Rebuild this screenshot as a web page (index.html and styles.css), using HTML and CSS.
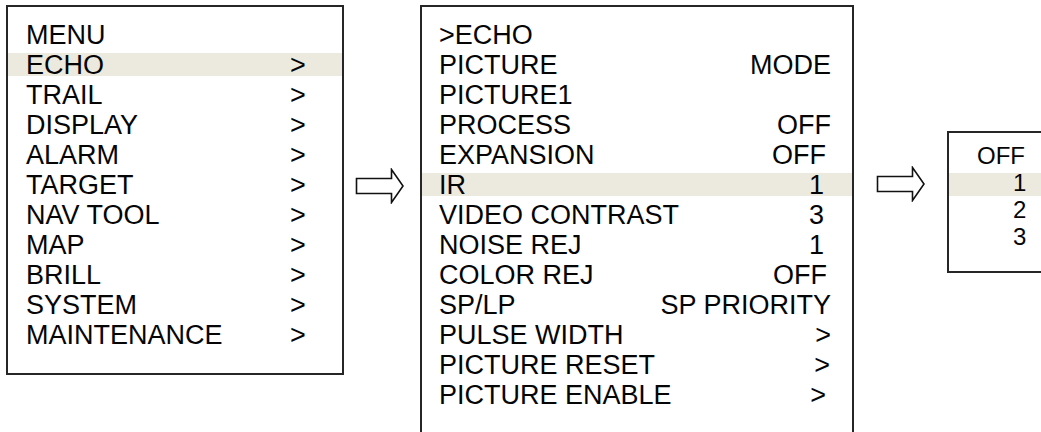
FILE: index.html
```html
<!DOCTYPE html>
<html lang="en">
<head>
<meta charset="utf-8">
<title>Menu</title>
<link rel="stylesheet" href="styles.css">
</head>
<body>
<div class="stage">
  <div class="box box-main">
    <div class="row"><span>MENU</span><span></span></div>
    <div class="row hl"><span>ECHO</span><span>&gt;</span></div>
    <div class="row"><span>TRAIL</span><span>&gt;</span></div>
    <div class="row"><span>DISPLAY</span><span>&gt;</span></div>
    <div class="row"><span>ALARM</span><span>&gt;</span></div>
    <div class="row"><span>TARGET</span><span>&gt;</span></div>
    <div class="row"><span>NAV TOOL</span><span>&gt;</span></div>
    <div class="row"><span>MAP</span><span>&gt;</span></div>
    <div class="row"><span>BRILL</span><span>&gt;</span></div>
    <div class="row"><span>SYSTEM</span><span>&gt;</span></div>
    <div class="row"><span>MAINTENANCE</span><span>&gt;</span></div>
  </div>

  <svg class="arrow arrow-1" width="50" height="36" viewBox="0 0 50 36" aria-hidden="true">
    <path d="M1.5 10.5 H36.5 V1.5 L48 18 L36.5 34.5 V25.5 H1.5 Z" fill="#fff" stroke="#111" stroke-width="1.6" stroke-linejoin="miter"/>
  </svg>

  <div class="box box-echo">
    <div class="line"><span>&gt;ECHO</span></div>
    <div class="line"><span>PICTURE</span><span class="val">MODE</span></div>
    <div class="line"><span>PICTURE1</span></div>
    <div class="line"><span>PROCESS</span><span class="val">OFF</span></div>
    <div class="line"><span>EXPANSION</span><span class="val in5">OFF</span></div>
    <div class="line hl"><span>IR</span><span class="val in7">1</span></div>
    <div class="line"><span>VIDEO CONTRAST</span><span class="val in7">3</span></div>
    <div class="line"><span>NOISE REJ</span><span class="val in7">1</span></div>
    <div class="line"><span>COLOR REJ</span><span class="val in4">OFF</span></div>
    <div class="line"><span>SP/LP</span><span class="val">SP PRIORITY</span></div>
    <div class="line"><span>PULSE WIDTH</span><span class="val">&gt;</span></div>
    <div class="line"><span>PICTURE RESET</span><span class="val in1">&gt;</span></div>
    <div class="line"><span>PICTURE ENABLE</span><span class="val in5">&gt;</span></div>
  </div>

  <svg class="arrow arrow-2" width="50" height="36" viewBox="0 0 50 36" aria-hidden="true">
    <path d="M1.5 10.5 H36.5 V1.5 L48 18 L36.5 34.5 V25.5 H1.5 Z" fill="#fff" stroke="#111" stroke-width="1.6" stroke-linejoin="miter"/>
  </svg>

  <div class="box box-opts">
    <div class="opt">OFF</div>
    <div class="opt num hl-sm">1</div>
    <div class="opt num">2</div>
    <div class="opt num">3</div>
  </div>
</div>
</body>
</html>
```

FILE: styles.css
```css
html, body {
  margin: 0;
  padding: 0;
  background: #ffffff;
  overflow: hidden;
}

body {
  width: 1041px;
  height: 432px;
  font-family: "Liberation Sans", Arial, sans-serif;
  color: #050505;
}

.stage {
  display: flex;
  align-items: flex-start;
  padding: 5px 0 0 6px;
  width: 1035px;
  overflow: hidden;
}

.box {
  box-sizing: border-box;
  border: 2px solid #262626;
  background: #ffffff;
  flex: none;
}

/* left: main menu */
.box-main {
  width: 338px;
  height: 370px;
  padding: 13px 0 0 18px;
  font-size: 27px;
  line-height: 30px;
}

.row {
  display: grid;
  grid-template-columns: 264px auto;
  margin-left: -18px;
  padding-left: 18px;
}

/* middle: echo sub menu */
.box-echo {
  width: 434px;
  height: 430px;
  padding: 13px 0 0 0;
  font-size: 27px;
  line-height: 30px;
}

.line {
  display: flex;
  justify-content: space-between;
  padding: 0 21px 0 17px;
}

.val.in1 { margin-right: 1px; }
.val.in4 { margin-right: 4px; }
.val.in5 { margin-right: 5px; }
.val.in7 { margin-right: 7px; }

/* right: option list */
.box-opts {
  width: 100px;
  height: 142px;
  margin-top: 126px;
  margin-right: -20px;
  padding: 9px 0 0 28px;
  font-size: 24px;
  line-height: 27px;
}

.opt {
  margin-left: -28px;
  padding-left: 28px;
}

.opt.num {
  padding-left: 64px;
}

/* highlight band */
.hl {
  background: linear-gradient(to bottom,
    transparent 0, transparent 3px,
    #ece9df 3px, #ece9df 26px,
    transparent 26px);
}

.hl-sm {
  background: linear-gradient(to bottom,
    transparent 0, transparent 4px,
    #ece9df 4px, #ece9df 27px);
}

.arrow {
  flex: none;
  display: block;
}

.arrow-1 {
  margin: 163px 15px 0 11px;
}

.arrow-2 {
  margin: 161px 21px 0 22px;
}
```
